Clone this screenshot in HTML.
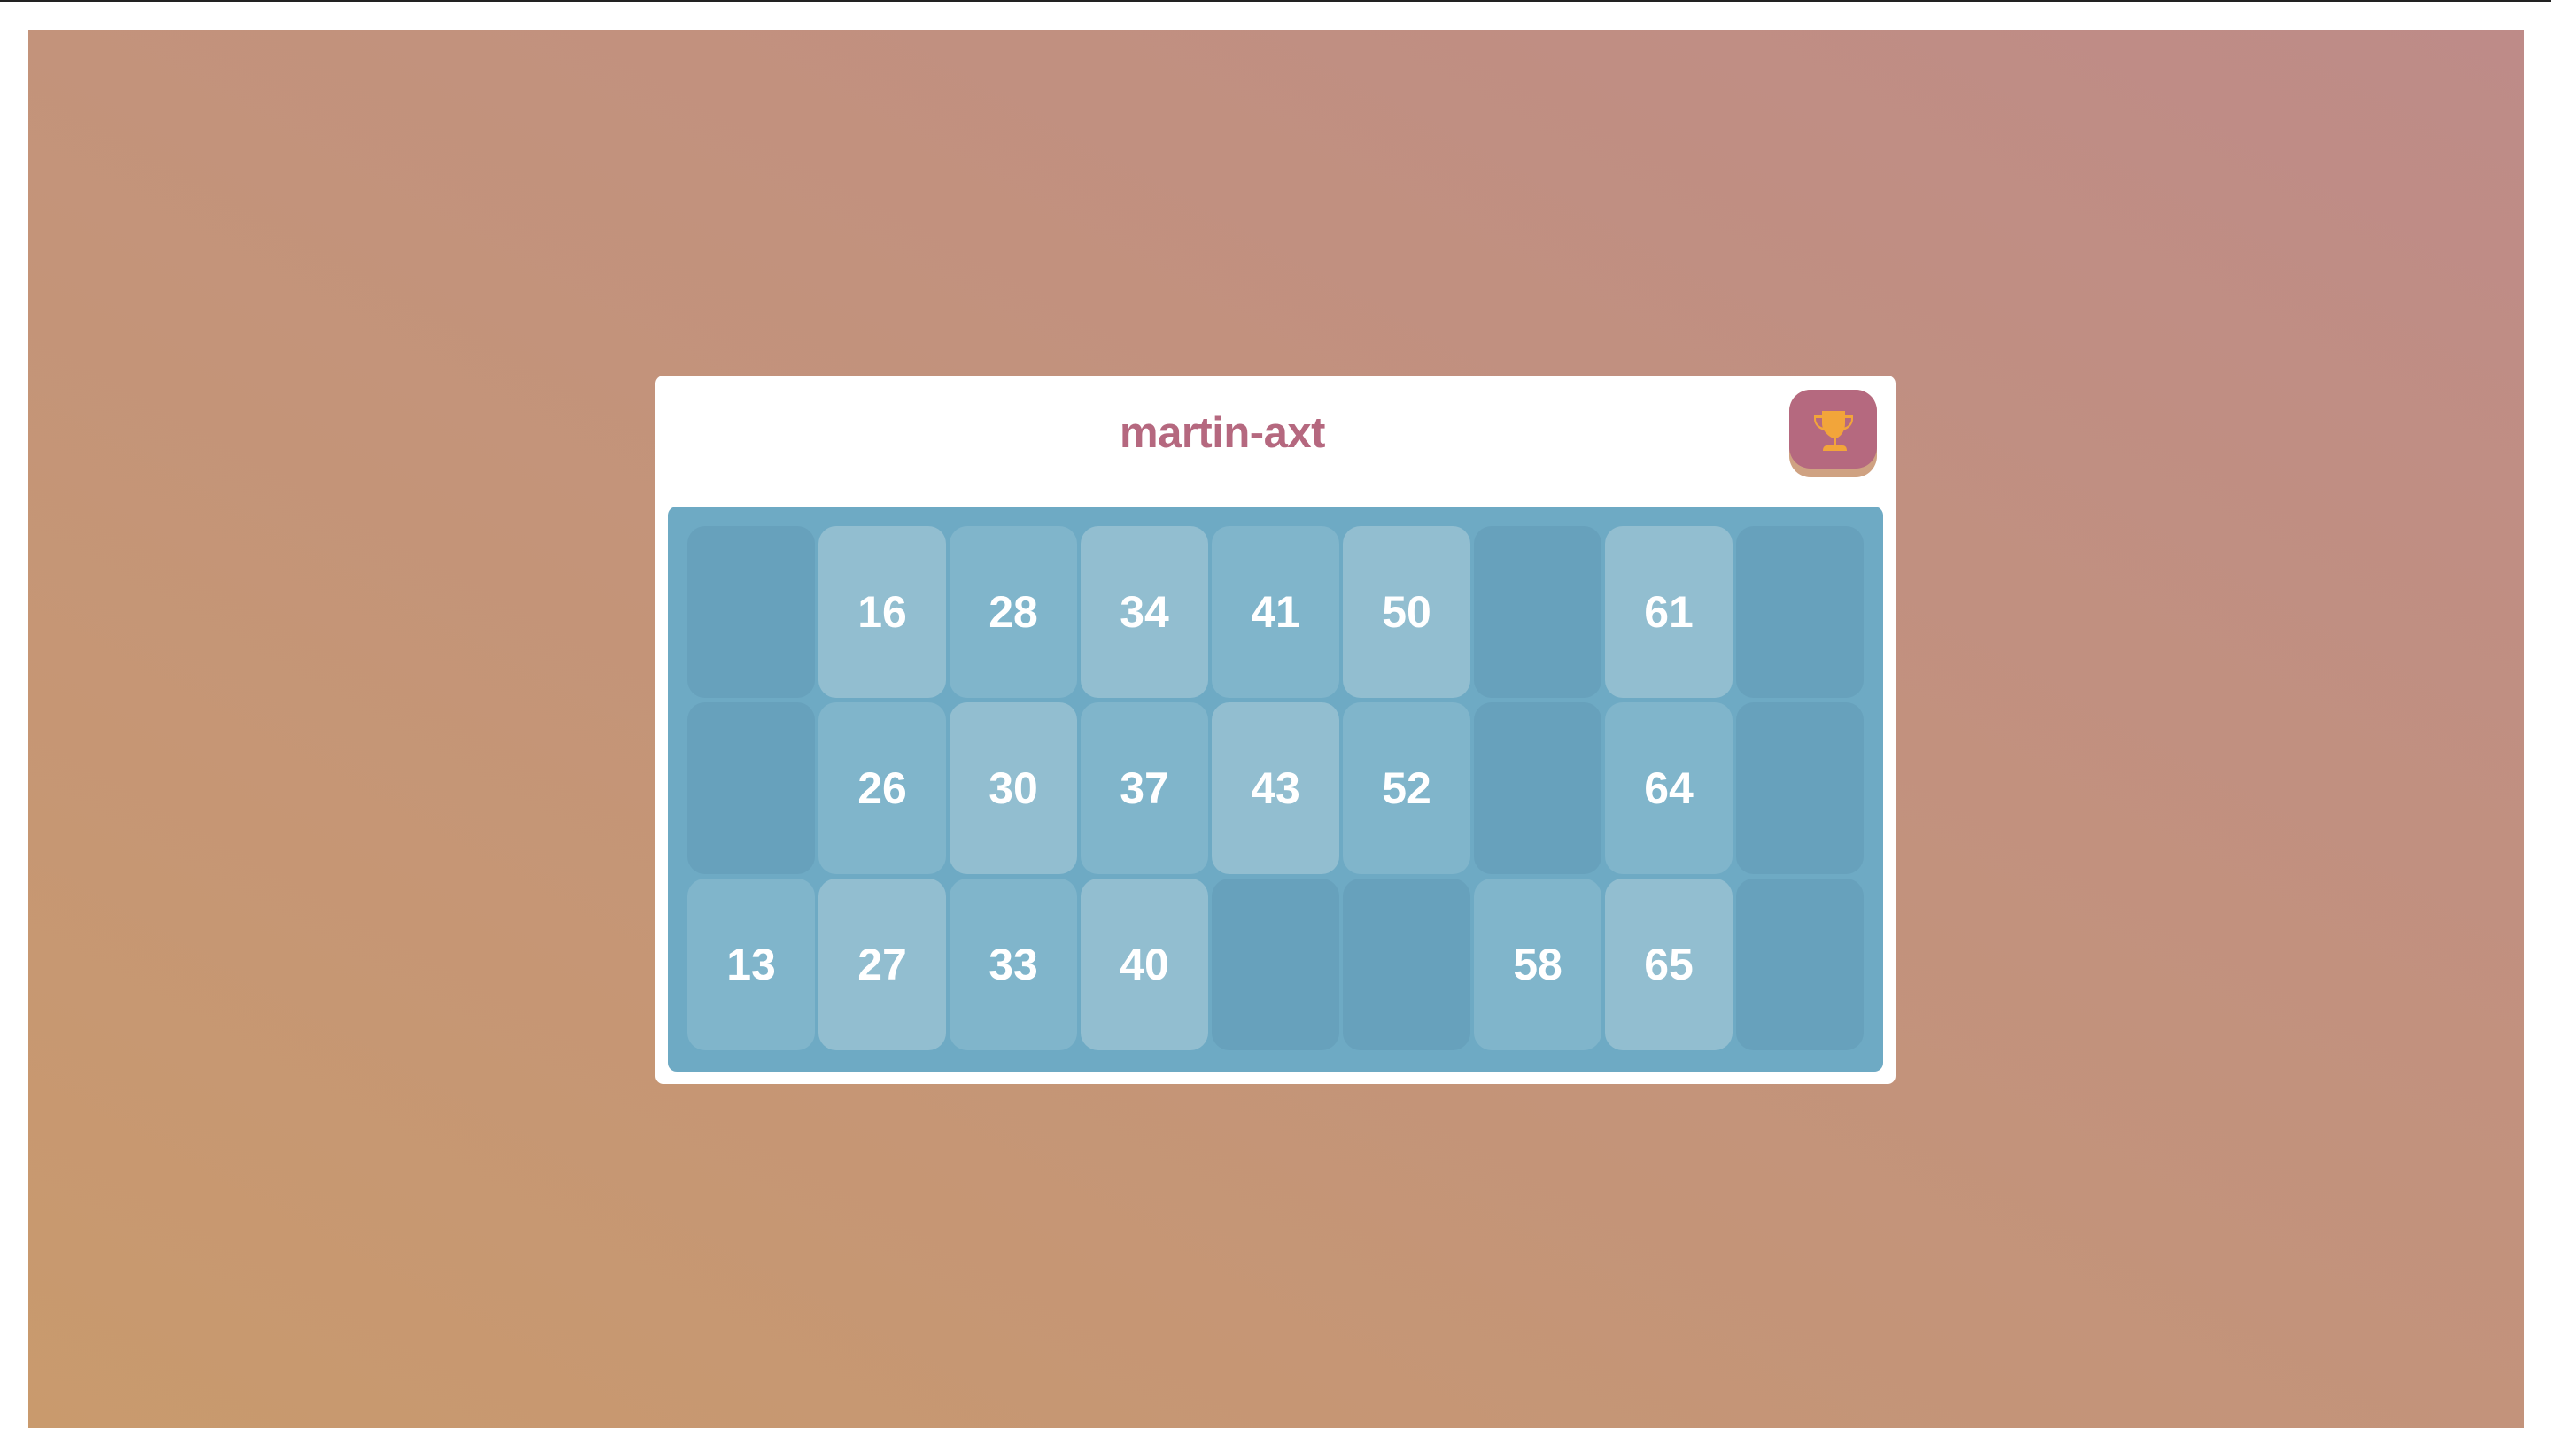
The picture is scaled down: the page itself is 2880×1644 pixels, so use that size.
<!DOCTYPE html>
<html><head><style>
html,body{margin:0;padding:0;width:2880px;height:1644px;background:#fff;overflow:hidden;font-family:"Liberation Sans",Arial,sans-serif;}
.topbar{position:absolute;left:0;top:0;width:2880px;height:2px;background:#222;}
.bg{position:absolute;left:32px;top:34px;width:2817px;height:1578px;background:linear-gradient(to top right,#c99a6d 0%,#c3937b 50%,#be8b88 100%);}
.card{position:absolute;left:740px;top:424px;width:1400px;height:800px;background:#fff;border-radius:9px;}
.title{position:absolute;left:0;width:1280px;top:37px;text-align:center;font-weight:bold;font-size:49px;color:#b5687f;letter-spacing:-0.5px;}
.btn{position:absolute;left:1280px;top:16px;width:99px;height:99px;border-radius:24px;background:#cfa282;}
.btn .face{position:absolute;left:0;top:0;width:99px;height:89px;border-radius:24px;background:#b5697f;}
.board{position:absolute;left:14px;top:148px;width:1372px;height:638px;background:#6eaac4;border-radius:10px;}
.c{position:absolute;width:144px;height:194px;border-radius:20px;color:#fff;font-weight:bold;font-size:50px;display:flex;align-items:center;justify-content:center;}
.e{background:#67a1bc;}.m{background:#80b5cb;}.l{background:#92bed0;}
</style></head><body>
<div class="topbar"></div>
<div class="bg"></div>
<div class="card">
<div class="title">martin-axt</div>
<div class="btn"><div class="face">
<svg width="99" height="89" viewBox="0 0 99 89" style="position:absolute;left:0;top:0">
<g fill="#f2a53a">
<path d="M37 24h26v14c0 9-5 15-10 17v8h7c4 0 5 3 5 6H38c0-3 1-6 5-6h7v-8c-5-2-13-8-13-17z"/>
<path d="M37 29h-9v4c0 7 6 12 12 13l-1-3c-5-1-9-5-9-10v-1h7z"/>
<path d="M63 29h9v4c0 7-6 12-12 13l1-3c5-1 9-5 9-10v-1h-7z"/>
</g></svg></div></div>
<div class="board" id="b"></div>
</div>
<script>
var rows=[["","16","28","34","41","50","","61",""],["","26","30","37","43","52","","64",""],["13","27","33","40","","","58","65",""]];
var b=document.getElementById('b'),h='';
for(var r=0;r<3;r++)for(var c=0;c<9;c++){var t=rows[r][c];var cls=t?((r+c)%2?'l':'m'):'e';
h+='<div class="c '+cls+'" style="left:'+(22+c*148)+'px;top:'+(22+r*199)+'px">'+t+'</div>';}
b.innerHTML=h;
</script>
</body></html>
